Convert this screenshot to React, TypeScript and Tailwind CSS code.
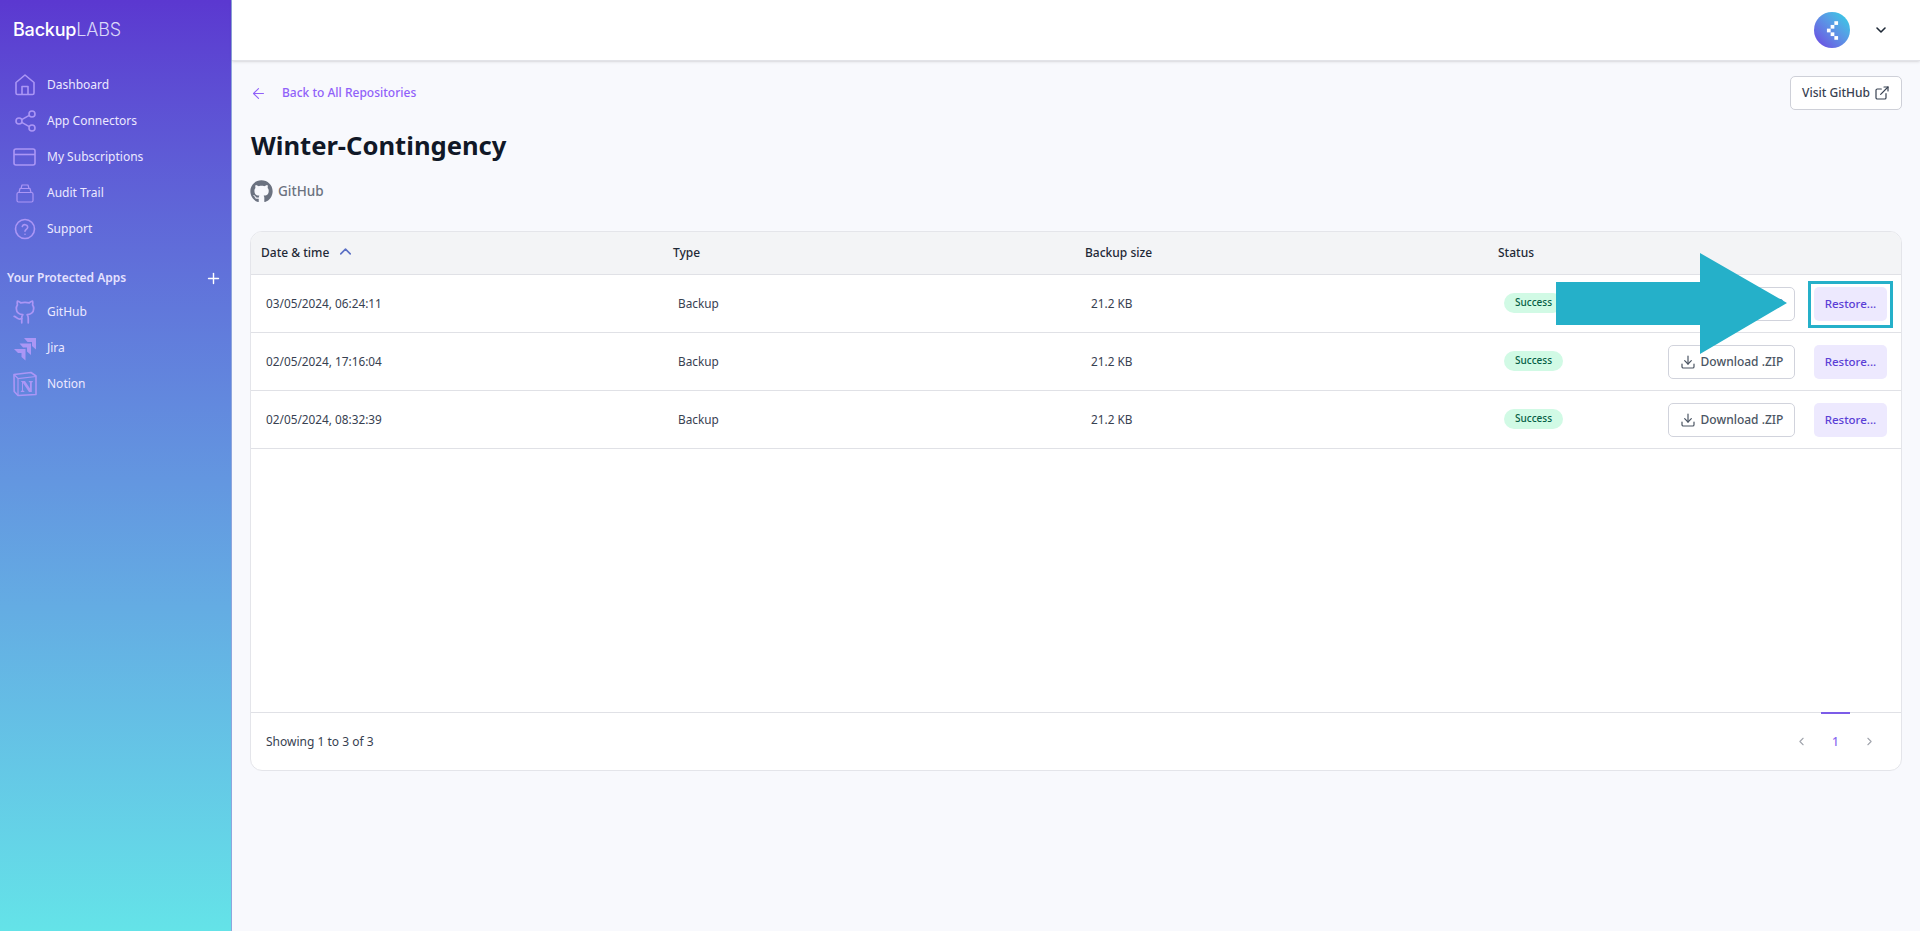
// App.tsx
import React from 'react';
import { ArrowLeft, ChevronDown, ChevronLeft, ChevronRight, ChevronUp, Download, ExternalLink, Plus } from 'lucide-react';
import { FaGithub } from 'react-icons/fa';

const iconClass = 'w-[26px] h-[26px] text-[#ab96f5]';

const HomeIcon = () => (
  <svg viewBox="0 0 26 26" fill="none" stroke="currentColor" strokeWidth="1.6" strokeLinejoin="round" className={iconClass}>
    <path d="M4 10.500 13 3l9 7.500V21a1.500 1.500 0 0 1-1.500 1.500h-15A1.500 1.500 0 0 1 4 21z" />
    <path d="M10 22.500V14.500h6v8" />
  </svg>
);

const ShareIcon = () => (
  <svg viewBox="0 0 26 26" fill="none" stroke="currentColor" strokeWidth="1.6" className={iconClass}>
    <circle cx="20" cy="6" r="3" />
    <circle cx="7" cy="13" r="3" />
    <circle cx="20" cy="20" r="3" />
    <path d="M9.700 11.600 17.300 7.400M9.700 14.400l7.600 4.200" />
  </svg>
);

const CardIcon = () => (
  <svg viewBox="0 0 26 26" fill="none" stroke="currentColor" strokeWidth="1.6" className={iconClass}>
    <rect x="2" y="5" width="21" height="16" rx="2" />
    <path d="M2 10.500h21" />
  </svg>
);

const AuditIcon = () => (
  <svg viewBox="0 0 26 26" fill="none" stroke="currentColor" strokeWidth="1.200" strokeLinejoin="round" className={iconClass}>
    <rect x="5" y="12.500" width="16" height="9.500" rx="1.500" />
    <path d="M7 12.500 8 8.500h10l1 4M9 8.500 10 5h6l1 3.500" />
  </svg>
);

const HelpIcon = () => (
  <svg viewBox="0 0 26 26" fill="none" stroke="currentColor" strokeWidth="1.600" strokeLinecap="round" className={iconClass}>
    <circle cx="13" cy="13" r="9.500" />
    <path d="M10.300 10.400a2.800 2.800 0 0 1 5.400.9c0 1.900-2.700 2.300-2.700 4" />
    <path d="M13 18.200v.1" />
  </svg>
);

const GithubOutline = () => (
  <svg viewBox="0 0 24 24" fill="none" stroke="currentColor" strokeWidth="1.600" strokeLinecap="round" strokeLinejoin="round" className={iconClass}>
    <path d="M15 22v-4a4.800 4.800 0 0 0-1-3.500c3 0 6-2 6-5.500.08-1.250-.27-2.480-1-3.500.28-1.150.28-2.350 0-3.500 0 0-1 0-3 1.500-2.640-.5-5.360-.5-8 0C6 2 5 2 5 2c-.3 1.150-.3 2.350 0 3.500A5.403 5.403 0 0 0 4 9c0 3.500 3 5.500 6 5.500-.39.49-.68 1.050-.85 1.650-.17.6-.22 1.230-.15 1.850v4" />
    <path d="M9 18c-4.510 2-5-2-7-2" />
  </svg>
);

const JiraIcon = () => (
  <svg viewBox="0 0 26 26" fill="currentColor" className={iconClass}>
    <path d="M12 3h12v11.500l-4-3.500v-4h-4.500z" />
    <path d="M7.500 8.500h11.500v11.500l-4-3.500v-4h-4z" />
    <path d="M2 14h11.500v11.500l-4-3.500v-4H6z" />
  </svg>
);

const NotionIcon = () => (
  <svg viewBox="0 0 26 26" className={iconClass}>
    <path d="M2 3.500 19 1.500l5 3.500v18.500L6 24.500l-3.800-4z" fill="none" stroke="currentColor" strokeWidth="1.600" strokeLinejoin="round" />
    <path d="M2 3.500 6 7.500l18-2M6 7.500v17" fill="none" stroke="currentColor" strokeWidth="1.200" />
    <path d="M9 10h4l5 7.500V11.500l-1.200-.5V10h4v1l-1 .5V21h-2.800l-6-9v7.500l1.300.5v1H8.800v-1l1.200-.5v-8.500l-1-.5z" fill="currentColor" />
  </svg>
);

const navItems = [
  { label: 'Dashboard', icon: <HomeIcon /> },
  { label: 'App Connectors', icon: <ShareIcon /> },
  { label: 'My Subscriptions', icon: <CardIcon /> },
  { label: 'Audit Trail', icon: <AuditIcon /> },
  { label: 'Support', icon: <HelpIcon /> },
];

const appItems = [
  { label: 'GitHub', icon: <GithubOutline /> },
  { label: 'Jira', icon: <JiraIcon /> },
  { label: 'Notion', icon: <NotionIcon /> },
];

const rows = ['03/05/2024, 06:24:11', '02/05/2024, 17:16:04', '02/05/2024, 08:32:39'];

const NavRow = ({ label, icon }: { label: string; icon: React.ReactNode }) => (
  <div className="flex items-center h-9 pl-[12px]">
    <span className="w-[35px] shrink-0 flex items-center">{icon}</span>
    <span className="text-[12px] text-[#ece8ff]">{label}</span>
  </div>
);

const Sidebar = () => (
  <aside className="w-[232px] shrink-0 h-full bg-gradient-to-b from-[#5b38d0] to-[#64e3e8] border-r border-[#8fa6dc]">
    <div className="pl-[13px] pt-[18px] text-[18px] leading-[24px] text-white font-['Inter',sans-serif] tracking-[-0.2px]">
      <span className="font-medium">Backup</span>
      <span className="font-light text-[#d9d6f8]">LABS</span>
    </div>
    <nav className="mt-[25px]">
      {navItems.map((item) => (
        <NavRow key={item.label} {...item} />
      ))}
    </nav>
    <div className="mt-[22px] mb-[7px] flex items-center justify-between pl-[7px] pr-[9px] h-[18px]">
      <span className="text-[12px] font-semibold text-[#e6e2ff]">Your Protected Apps</span>
      <Plus className="w-[17px] h-[17px] text-white" strokeWidth={2} />
    </div>
    {appItems.map((item) => (
      <NavRow key={item.label} {...item} />
    ))}
  </aside>
);

const TopBar = () => (
  <header className="h-[61px] shrink-0 bg-white border-b border-[#e2e3e8] shadow-sm flex items-center justify-end pr-[31px]">
    <div className="w-9 h-9 rounded-full bg-gradient-to-tr from-[#6a3be0] to-[#1bd4e4] flex items-center justify-center">
      <svg viewBox="0 0 14 20" className="w-[13px] h-[19px]" fill="white">
        <rect x="9" y="0" width="4" height="4" />
        <rect x="5" y="4" width="4" height="4" />
        <rect x="1" y="8" width="4" height="4" />
        <rect x="5" y="12" width="4" height="4" />
        <rect x="9" y="16" width="4" height="4" />
      </svg>
    </div>
    <ChevronDown className="ml-[23px] w-[16px] h-[16px] text-[#1f2937]" strokeWidth={2.4} />
  </header>
);

const Table = () => (
  <div className="mt-[27px] h-[540px] bg-white rounded-[12px] border border-[#e4e5ea] flex flex-col overflow-hidden">
    <div className="h-[43px] shrink-0 bg-[#f3f4f6] border-b border-[#e0e1e6] grid grid-cols-[412px_412px_412px_1fr] items-center text-[12px] font-medium text-[#1f2937]">
      <div className="pl-[10px] flex items-center gap-[7px]">
        Date &amp; time
        <ChevronUp className="w-[19px] h-[19px] text-[#5a6fc4] -mt-[3px]" strokeWidth={2} />
      </div>
      <div className="pl-[10px]">Type</div>
      <div className="pl-[10px]">Backup size</div>
      <div className="pl-[11px]">Status</div>
    </div>
    {rows.map((date) => (
      <div key={date} className="h-[58px] shrink-0 border-b border-[#e0e1e6] grid grid-cols-[412px_412px_412px_1fr] items-center text-[11.800px] text-[#374151]">
        <div className="pl-[15px]">{date}</div>
        <div className="pl-[15px]">Backup</div>
        <div className="pl-[16px]">21.2 KB</div>
        <div className="pl-[17px] pr-[14px] flex items-center">
          <span className="w-[59px] h-[20px] rounded-full bg-[#d1fae5] text-[#065f46] text-[10px] font-medium flex items-center justify-center -mt-[2px]">Success</span>
          <button className="ml-auto w-[127px] h-[34px] rounded-[5px] bg-white border border-[#d1d3dc] text-[12px] font-medium text-[#4b5563] flex items-center justify-center gap-[5px]">
            <Download className="w-[16px] h-[16px]" strokeWidth={1.8} />
            Download .ZIP
          </button>
          <button className="ml-[19px] w-[73px] h-[34px] rounded-[5px] bg-[#ede9fe] text-[11.500px] font-medium text-[#5b3fd6]">Restore...</button>
        </div>
      </div>
    ))}
    <div className="flex-1" />
    <div className="h-[58px] shrink-0 border-t border-[#e0e1e6] flex items-center pl-[15px] pr-[25px] text-[12px] text-[#374151]">
      Showing 1 to 3 of 3
      <div className="ml-auto flex items-center">
        <ChevronLeft className="w-[13px] h-[13px] text-[#a1a5ad]" strokeWidth={2} />
        <div className="relative w-[29px] mx-[13px] h-[58px] flex items-center justify-center text-[12px] font-medium text-[#8b6cf0]">
          <span className="absolute top-[-1px] left-0 right-0 h-[2px] bg-[#7c5ce8]" />
          1
        </div>
        <ChevronRight className="w-[13px] h-[13px] text-[#a1a5ad]" strokeWidth={2} />
      </div>
    </div>
  </div>
);

const App: React.FC = () => {
  return (
    <div className="relative flex w-[1920px] h-[931px] overflow-hidden bg-[#f8f9fd] font-['Noto_Sans',sans-serif]">
      <Sidebar />
      <div className="flex-1 min-w-0 flex flex-col">
        <TopBar />
        <main className="pl-[18px] pr-[18px] pt-[15px]">
          <div className="flex items-start justify-between h-[34px]">
            <a className="flex items-center text-[12px] font-medium text-[#9061f9] mt-[8px]">
              <ArrowLeft className="w-[17px] h-[17px] mr-[15px]" strokeWidth={1.6} />
              Back to All Repositories
            </a>
            <button className="w-[112px] h-[34px] rounded-[5px] bg-white border border-[#ced0d8] text-[12px] font-medium text-[#374151] flex items-center justify-center gap-[4px]">
              Visit GitHub
              <ExternalLink className="w-[16px] h-[16px]" strokeWidth={1.8} />
            </button>
          </div>
          <h1 className="mt-[18px] text-[25.600px] leading-[36px] font-bold text-[#111827] pl-px">Winter-Contingency</h1>
          <div className="mt-[15px] h-[25px] flex items-center text-[13.500px] font-medium text-[#6b7280]">
            <FaGithub className="w-[23px] h-[23px] mr-[5px]" />
            GitHub
          </div>
          <Table />
        </main>
      </div>
      <svg viewBox="0 0 231 101" className="absolute left-[1556px] top-[253px] w-[231px] h-[101px]" fill="#25b0c9">
        <polygon points="0,29 144,29 144,0 231,50 144,101 144,72 0,72" />
      </svg>
      <div className="absolute left-[1808px] top-[281px] w-[85px] h-[47px] border-[3px] border-[#25b0c9]" />
    </div>
  );
};

export default App;
